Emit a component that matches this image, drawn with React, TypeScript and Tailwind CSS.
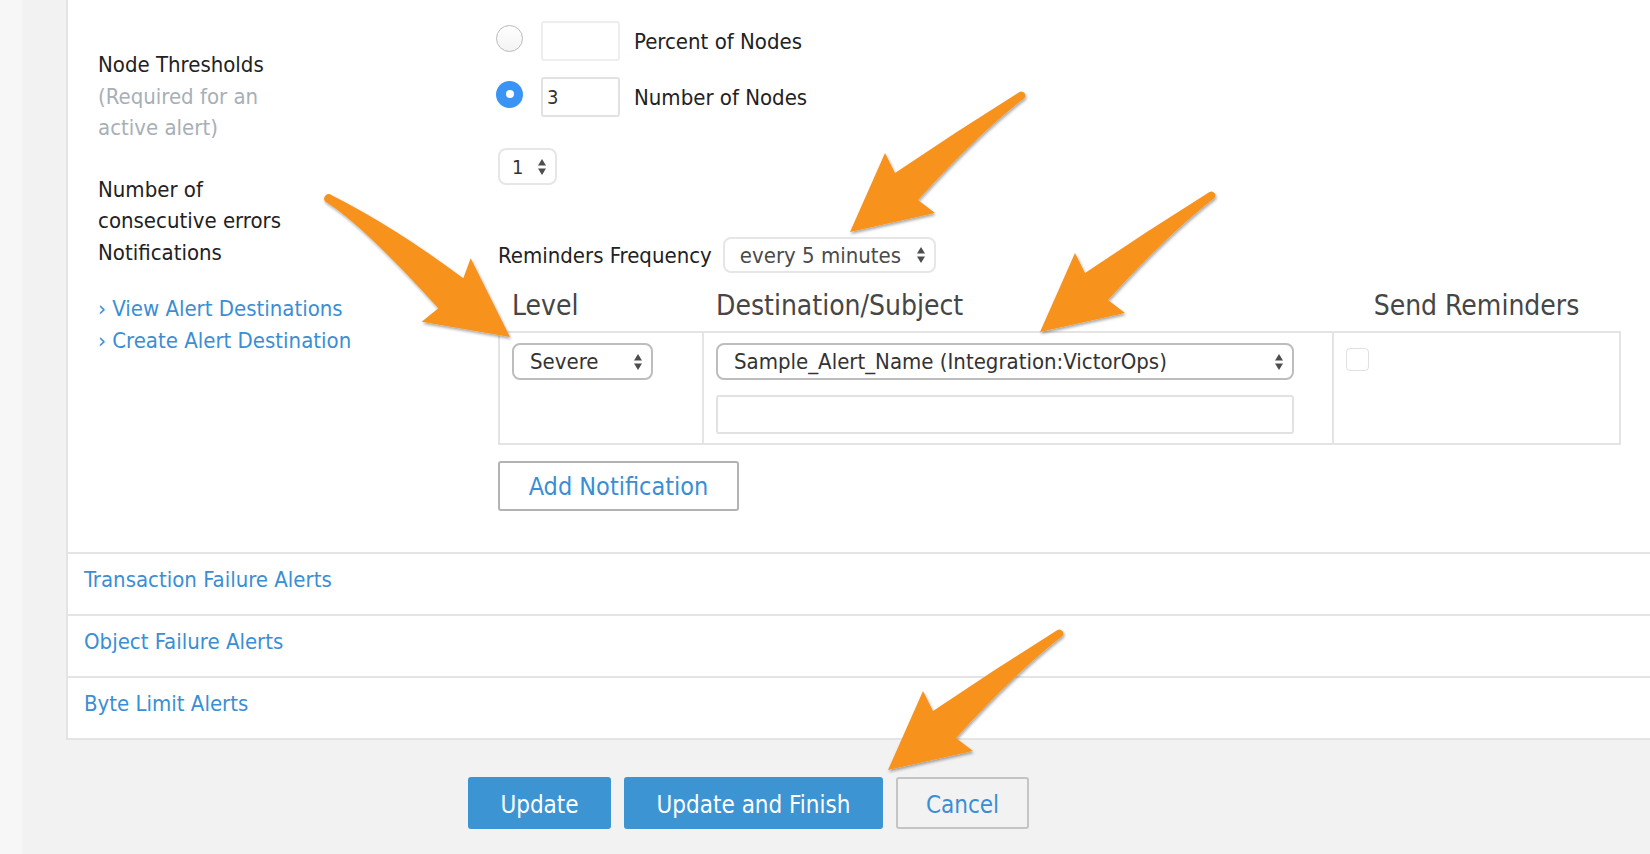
import React from "react";

function UpDown({ className = "" }: { className?: string }) {
  return (
    <svg width="10" height="18" viewBox="0 0 10 18" className={className}>
      <path d="M1 7.5 L5 1 L9 7.5 Z" fill="#4d4d4d" />
      <path d="M1 10.5 L5 17 L9 10.5 Z" fill="#4d4d4d" />
    </svg>
  );
}

function Radio({ checked, className = "" }: { checked?: boolean; className?: string }) {
  if (checked) {
    return (
      <div className={"w-[27px] h-[27px] rounded-full bg-[#3a94f6] flex items-center justify-center shrink-0 " + className}>
        <div className="w-[8px] h-[8px] rounded-full bg-white" />
      </div>
    );
  }
  return (
    <div
      className={
        "w-[27px] h-[27px] rounded-full border border-[#b9b9b9] bg-gradient-to-b from-white to-[#f3f3f3] shrink-0 " + className
      }
    />
  );
}

const B = "M0 0 L35 -79 L45 -59 Q107 -101 169.5 -140 A4 4 0 0 1 174.5 -134 Q129 -99 68 -32 L85 -19 Z";

function Arrows() {
  return (
    <svg className="absolute inset-0 pointer-events-none" width="1650" height="854" viewBox="0 0 1650 854">
      <defs>
        <filter id="sh" x="-20%" y="-20%" width="140%" height="140%">
          <feDropShadow dx="1" dy="2" stdDeviation="1.5" floodColor="#000" floodOpacity="0.35" />
        </filter>
      </defs>
      <g fill="#f7931e" filter="url(#sh)">
        <path transform="translate(850 232)" d={B} />
        <path transform="translate(1040 332)" d={B} />
        <path transform="translate(888 770)" d={B} />
        <path d="M510 337 L470.7 258.3 L463.3 278.3 Q395 227 331.2 194.9 A4.5 4.5 0 0 0 325.4 201.7 Q362 224 438.3 308.3 L421.7 321.7 Z" />
      </g>
    </svg>
  );
}

export default function App() {
  return (
    <div className="relative w-[1650px] h-[854px] overflow-hidden bg-[#f2f2f2] font-['DejaVu_Sans_Condensed','DejaVu_Sans',sans-serif] text-[22px] text-[#222]">
      <div className="flex h-full">
        <div className="w-[22px] shrink-0 bg-[#f7f7f7]" />
        <div className="flex-1 flex flex-col pl-[44px]">
          <div className="bg-white border-l-2 border-[#e4e4e4]">
            {/* top section */}
            <div className="flex h-[554px] border-b-2 border-[#e4e4e4]">
              <div className="w-[430px] shrink-0 pl-[30px] pt-[49px] leading-[31.5px]">
                <div>Node Thresholds</div>
                <div className="text-[#a8afb6]">
                  (Required for an
                  <br />
                  active alert)
                </div>
                <div className="mt-[30px]">
                  Number of
                  <br />
                  consecutive errors
                  <br />
                  Notifications
                </div>
                <div className="mt-[25px] text-[#3a8ed4]">
                  <div>› View Alert Destinations</div>
                  <div>› Create Alert Destination</div>
                </div>
              </div>
              <div className="flex-1 pt-[21px]">
                <div className="flex items-center h-[40px]">
                  <Radio className="-ml-[2px] mb-[6px]" />
                  <div className="ml-[18px] w-[79px] h-[40px] border-2 border-[#eeeeee] rounded-[3px]" />
                  <span className="ml-[14px]">Percent of Nodes</span>
                </div>
                <div className="flex items-center h-[40px] mt-[16px]">
                  <Radio checked className="-ml-[2px] mb-[6px]" />
                  <div className="ml-[18px] w-[79px] h-[40px] border-2 border-[#e2e2e2] rounded-[3px] flex items-center pl-[4px] text-[20px] text-[#333]">
                    3
                  </div>
                  <span className="ml-[14px]">Number of Nodes</span>
                </div>
                <div className="mt-[31px] w-[59px] h-[37px] border-2 border-[#e6e6e6] rounded-[8px] flex items-center pl-[12px] text-[20px] text-[#333]">
                  <span>1</span>
                  <UpDown className="ml-[14px]" />
                </div>
                <div className="mt-[52px] flex items-center h-[36px]">
                  <span>Reminders Frequency</span>
                  <div className="ml-[11px] w-[213px] h-[36px] border-2 border-[#e6e6e6] rounded-[8px] flex items-center justify-between pl-[15px] pr-[8px] text-[#4a4a4a]">
                    <span>every 5 minutes</span>
                    <UpDown />
                  </div>
                </div>
                <div className="mt-[16px] w-[1123px] grid grid-cols-[204px_630px_1fr] h-[33px] text-[28px] leading-[33px] text-[#464646]">
                  <div className="pl-[14px]">Level</div>
                  <div className="pl-[14px]">Destination/Subject</div>
                  <div className="text-center">Send Reminders</div>
                </div>
                <div className="mt-[9px] w-[1123px] border-2 border-[#e4e4e4] grid grid-cols-[202px_630px_1fr]">
                  <div className="pt-[10px] pl-[12px]">
                    <div className="w-[141px] h-[37px] border-2 border-[#bdbdbd] rounded-[8px] flex items-center justify-between pl-[16px] pr-[8px] text-[#333]">
                      <span>Severe</span>
                      <UpDown />
                    </div>
                  </div>
                  <div className="border-l-2 border-[#e4e4e4] pt-[10px] pb-[9px] pl-[12px]">
                    <div className="w-[578px] h-[37px] border-2 border-[#bdbdbd] rounded-[8px] flex items-center justify-between pl-[16px] pr-[8px] text-[#333]">
                      <span>Sample_Alert_Name (Integration:VictorOps)</span>
                      <UpDown />
                    </div>
                    <div className="mt-[15px] w-[578px] h-[39px] border-2 border-[#e2e2e2] rounded-[3px]" />
                  </div>
                  <div className="border-l-2 border-[#e4e4e4] pt-[15px] pl-[12px]">
                    <div className="w-[23px] h-[23px] border border-[#e0e0e0] rounded-[4px] bg-white" />
                  </div>
                </div>
                <button className="mt-[16px] w-[241px] h-[50px] pt-[2px] border-2 border-[#b3b3b3] rounded-[3px] text-[25px] text-[#3a8ed4] bg-white">
                  Add Notification
                </button>
              </div>
            </div>
            {/* collapsed sections */}
            <div className="h-[62px] border-b-2 border-[#e4e4e4] pl-[16px] pt-[13px] leading-[26px] text-[#3a8ed4]">
              Transaction Failure Alerts
            </div>
            <div className="h-[62px] border-b-2 border-[#e4e4e4] pl-[16px] pt-[13px] leading-[26px] text-[#3a8ed4]">
              Object Failure Alerts
            </div>
            <div className="h-[62px] border-b-2 border-[#e4e4e4] pl-[16px] pt-[13px] leading-[26px] text-[#3a8ed4]">
              Byte Limit Alerts
            </div>
          </div>
          <div className="pt-[37px] pl-[402px] flex gap-[13px] text-[24px]">
            <button className="w-[143px] h-[52px] pt-[3px] rounded-[3px] bg-[#3d94d3] text-white">Update</button>
            <button className="w-[259px] h-[52px] pt-[3px] rounded-[3px] bg-[#3d94d3] text-white">Update and Finish</button>
            <button className="w-[133px] h-[52px] pt-[3px] rounded-[3px] border-2 border-[#c4c4c4] text-[#3a8ed4]">Cancel</button>
          </div>
        </div>
      </div>
      <Arrows />
    </div>
  );
}
